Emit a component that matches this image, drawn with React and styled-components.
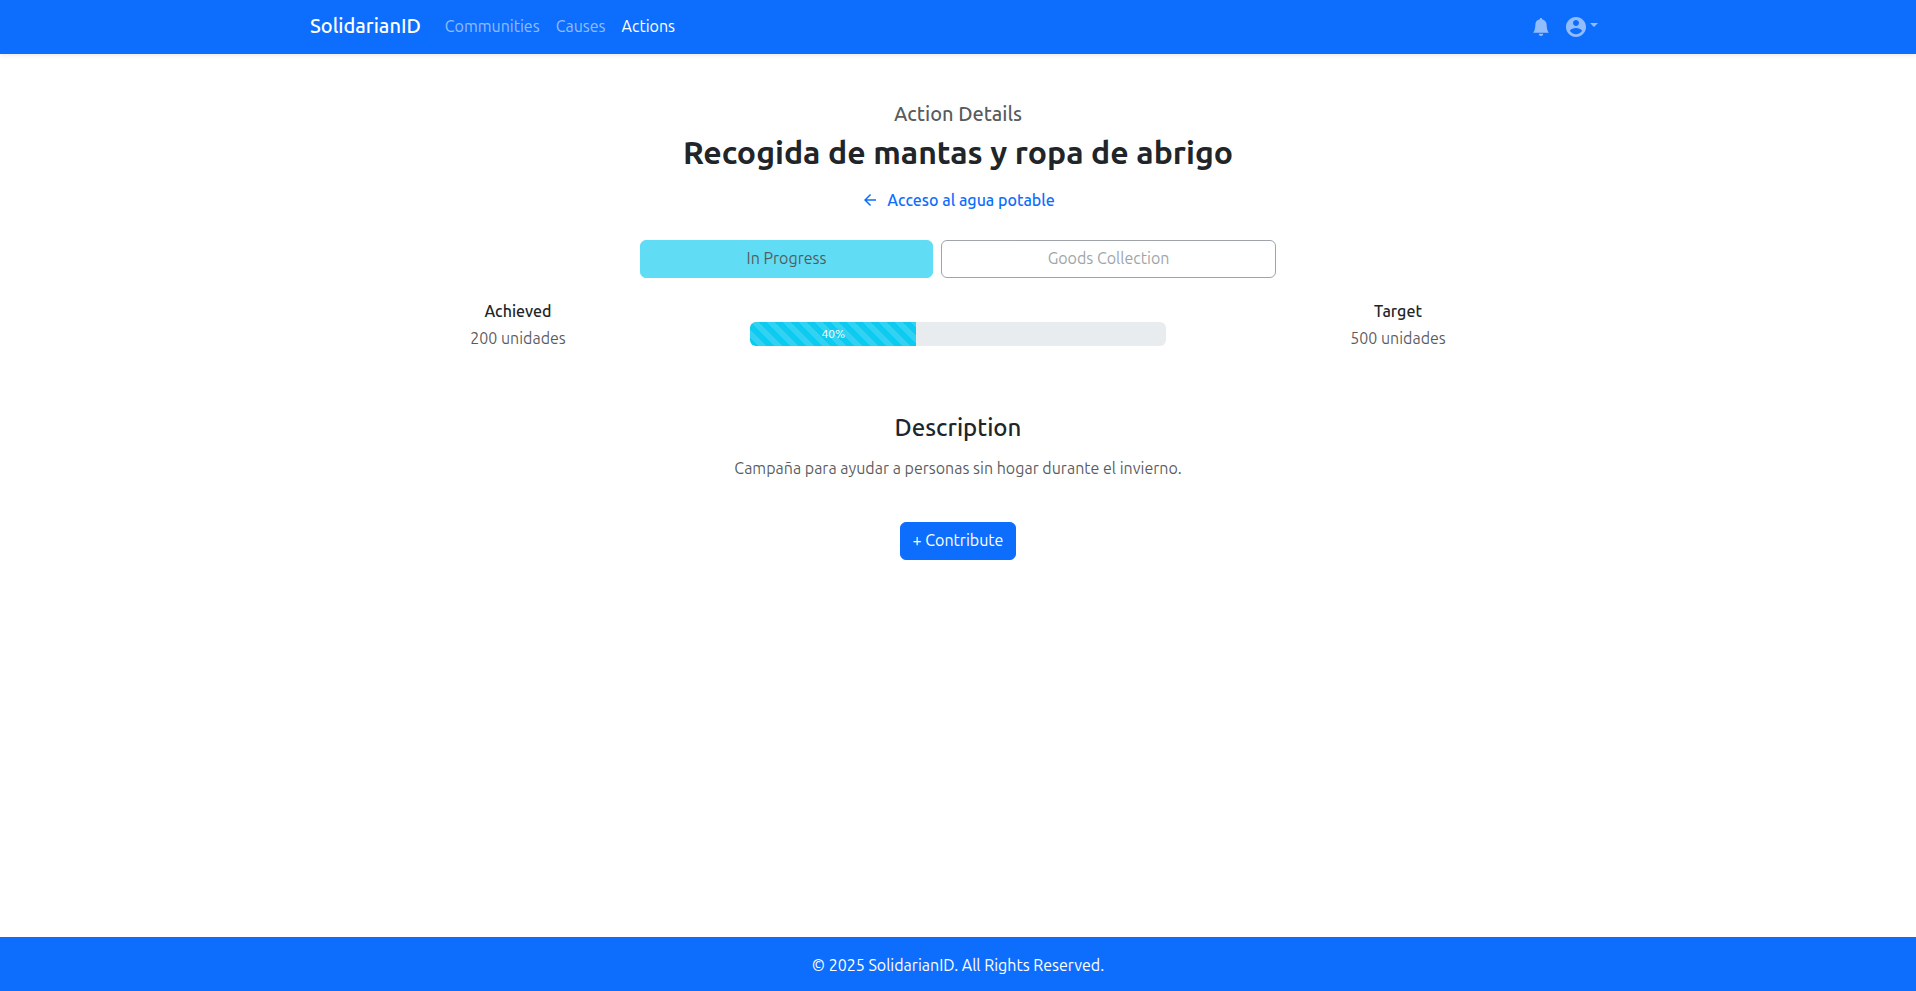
import React from 'react';
import styled, { createGlobalStyle } from 'styled-components';

const GlobalStyle = createGlobalStyle`
  *, *::before, *::after { box-sizing: border-box; }
  body {
    margin: 0;
    font-family: Ubuntu, "Open Sans", sans-serif;
    font-size: 16px;
    line-height: 24px;
    color: #212529;
    background: #fff;
  }
  h1, h2, h3, p, ul { margin: 0; padding: 0; }
  a { text-decoration: none; }
`;

const Page = styled.div`
  display: flex;
  flex-direction: column;
  min-height: 100vh;
`;

const Container = styled.div`
  width: 100%;
  max-width: 1320px;
  margin: 0 auto;
  padding: 0 12px;
`;

const Header = styled.header`
  background: #0d6efd;
  box-shadow: 0 2px 4px rgba(0, 0, 0, 0.075);
`;

const NavBar = styled(Container)`
  display: flex;
  align-items: center;
  height: 54px;
`;

const Brand = styled.a`
  margin-right: 16px;
  padding-bottom: 2px;
  font-size: 20px;
  line-height: 30px;
  font-weight: 500;
  color: #fff;
`;

const NavList = styled.ul`
  display: flex;
  flex: 1;
  && { padding-bottom: 2px; }
  list-style: none;
`;

const NavLink = styled.a`
  display: block;
  padding: 0 8px;
  color: ${({ $active }) => ($active ? '#fff' : 'rgba(255, 255, 255, 0.55)')};
`;

const IconButton = styled.button`
  display: flex;
  align-items: center;
  gap: 4px;
  padding: 0 8px;
  border: 0;
  background: none;
  color: rgba(255, 255, 255, 0.55);

  svg { display: block; }
`;

const Caret = styled.span`
  border-top: 4px solid;
  border-left: 4px solid transparent;
  border-right: 4px solid transparent;
  margin-bottom: 4px;
`;

const Main = styled.main`
  flex: 1;
  padding: 48px 0;
  text-align: center;
`;

const Eyebrow = styled.p`
  margin-bottom: 8px;
  font-size: 20px;
  font-weight: 500;
  color: rgba(33, 37, 41, 0.75);
`;

const Title = styled.h1`
  margin-bottom: 18px;
  font-size: 32px;
  line-height: 36px;
  font-weight: 600;
`;

const BackLink = styled.a`
  display: inline-flex;
  align-items: center;
  gap: 8px;
  vertical-align: top;
  font-weight: 500;
  color: #0d6efd;
`;

const ButtonGroup = styled.div`
  display: flex;
  gap: 8px;
  width: 100%;
  max-width: 636px;
  margin: 28px auto 24px;
`;

const Button = styled.button`
  padding: 5px 12px 7px;
  border: 1px solid #0d6efd;
  border-radius: 6px;
  font: inherit;
  color: #fff;
  background: #0d6efd;
`;

const StatusButton = styled(Button)`
  flex: 1 1 auto;
  opacity: 0.65;
  color: ${({ $filled }) => ($filled ? '#000' : '#6c757d')};
  border-color: ${({ $filled }) => ($filled ? '#0dcaf0' : '#6c757d')};
  background: ${({ $filled }) => ($filled ? '#0dcaf0' : 'transparent')};
`;

const ProgressRow = styled.div`
  display: grid;
  grid-template-columns: repeat(3, 1fr);
  align-items: center;
  gap: 24px;
  margin-bottom: 64px;
`;

const FigureLabel = styled.h3`
  && { margin-bottom: 6px; }
  font-size: 16px;
  line-height: 18px;
  font-weight: 500;
`;

const MutedText = styled.p`
  color: rgba(33, 37, 41, 0.75);
`;

const Track = styled.div`
  height: 24px;
  margin-top: 16px;
  overflow: hidden;
  border-radius: 6px;
  background: #e9ecef;
`;

const Bar = styled.div`
  height: 100%;
  font-size: 12px;
  color: #fff;
  background-color: #0dcaf0;
  background-image: linear-gradient(
    45deg,
    rgba(255, 255, 255, 0.15) 25%,
    transparent 25%,
    transparent 50%,
    rgba(255, 255, 255, 0.15) 50%,
    rgba(255, 255, 255, 0.15) 75%,
    transparent 75%,
    transparent
  );
  background-size: 16px 16px;
`;

const SectionTitle = styled.h2`
  margin-bottom: 14px;
  font-size: 24px;
  line-height: 28px;
  font-weight: 500;
`;

const Description = styled(MutedText)`
  margin-bottom: 42px;
`;

const Footer = styled.footer`
  padding: 16px 0 14px;
  text-align: center;
  color: #fff;
  background: #0d6efd;
`;

const BellIcon = () => (
  <svg width="18" height="18" viewBox="0 0 16 16" fill="currentColor" aria-hidden="true">
    <path d="M8 16a2 2 0 0 0 2-2H6a2 2 0 0 0 2 2m.995-14.901a1 1 0 1 0-1.99 0A5 5 0 0 0 3 6c0 1.098-.5 6-2 7h14c-1.5-1-2-5.902-2-7 0-2.42-1.72-4.44-4.005-4.901" />
  </svg>
);

const AccountIcon = () => (
  <svg width="20" height="20" viewBox="2 2 20 20" fill="currentColor" aria-hidden="true">
    <path d="M12 2C6.48 2 2 6.48 2 12s4.48 10 10 10 10-4.48 10-10S17.52 2 12 2zm0 3c1.66 0 3 1.34 3 3s-1.34 3-3 3-3-1.34-3-3 1.34-3 3-3zm0 14.2c-2.5 0-4.71-1.28-6-3.22.03-1.99 4-3.08 6-3.08 1.99 0 5.97 1.09 6 3.08-1.29 1.94-3.5 3.22-6 3.22z" />
  </svg>
);

const ArrowLeftIcon = () => (
  <svg width="18" height="18" viewBox="0 0 24 24" fill="currentColor" aria-hidden="true">
    <path d="M20 11H7.83l5.59-5.59L12 4l-8 8 8 8 1.41-1.41L7.83 13H20v-2z" />
  </svg>
);

const navItems = [
  { label: 'Communities' },
  { label: 'Causes' },
  { label: 'Actions', active: true },
];

const Figure = ({ label, value }) => (
  <div>
    <FigureLabel>{label}</FigureLabel>
    <MutedText>{value}</MutedText>
  </div>
);

const Progress = ({ percent }) => (
  <Track role="progressbar" aria-valuenow={percent} aria-valuemin={0} aria-valuemax={100} aria-label="Progress">
    <Bar style={{ width: `${percent}%` }}>{percent}%</Bar>
  </Track>
);

export default function App() {
  return (
    <Page>
      <GlobalStyle />
      <Header>
        <NavBar as="nav">
          <Brand href="#">SolidarianID</Brand>
          <NavList>
            {navItems.map(({ label, active }) => (
              <li key={label}>
                <NavLink href="#" $active={active} aria-current={active ? 'page' : undefined}>
                  {label}
                </NavLink>
              </li>
            ))}
          </NavList>
          <IconButton type="button" aria-label="Notifications">
            <BellIcon />
          </IconButton>
          <IconButton type="button" aria-label="Account">
            <AccountIcon />
            <Caret />
          </IconButton>
        </NavBar>
      </Header>
      <Main>
        <Container>
          <Eyebrow>Action Details</Eyebrow>
          <Title>Recogida de mantas y ropa de abrigo</Title>
          <BackLink href="#">
            <ArrowLeftIcon />
            Acceso al agua potable
          </BackLink>
          <ButtonGroup>
            <StatusButton type="button" disabled $filled>
              In Progress
            </StatusButton>
            <StatusButton type="button" disabled>
              Goods Collection
            </StatusButton>
          </ButtonGroup>
          <ProgressRow>
            <Figure label="Achieved" value="200 unidades" />
            <Progress percent={40} />
            <Figure label="Target" value="500 unidades" />
          </ProgressRow>
          <SectionTitle>Description</SectionTitle>
          <Description>Campaña para ayudar a personas sin hogar durante el invierno.</Description>
          <Button type="button">+ Contribute</Button>
        </Container>
      </Main>
      <Footer>
        <p>© 2025 SolidarianID. All Rights Reserved.</p>
      </Footer>
    </Page>
  );
}
